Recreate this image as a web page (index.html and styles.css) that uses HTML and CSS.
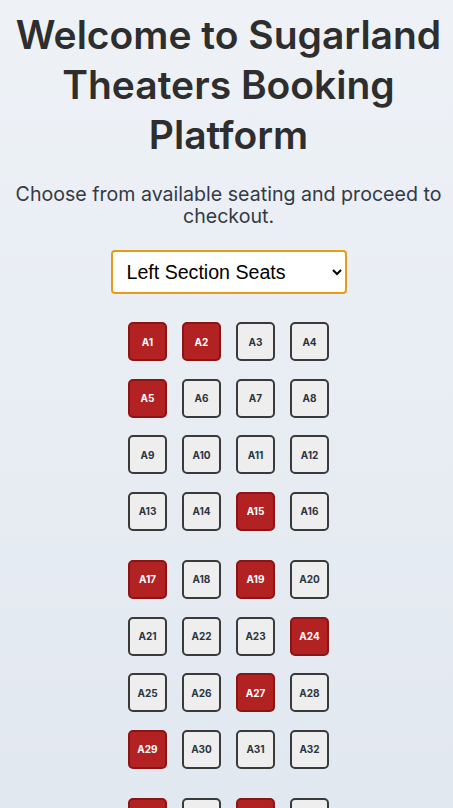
FILE: index.html
```html
<!DOCTYPE html>
<html lang="en">
<head>
<meta charset="utf-8">
<title>Sugarland Theaters Booking</title>
<link rel="stylesheet" href="styles.css">
</head>
<body>
<main class="page">
  <h1 class="title">Welcome to Sugarland Theaters Booking Platform</h1>
  <p class="subtitle">Choose from available seating and proceed to checkout.</p>
  <select class="section-select">
    <option>Left Section Seats</option>
    <option>Center Section Seats</option>
    <option>Right Section Seats</option>
  </select>
  <div class="seat-groups">
    <div class="seat-grid">
      <button class="seat taken">A1</button>
      <button class="seat taken">A2</button>
      <button class="seat">A3</button>
      <button class="seat">A4</button>
      <button class="seat taken">A5</button>
      <button class="seat">A6</button>
      <button class="seat">A7</button>
      <button class="seat">A8</button>
      <button class="seat">A9</button>
      <button class="seat">A10</button>
      <button class="seat">A11</button>
      <button class="seat">A12</button>
      <button class="seat">A13</button>
      <button class="seat">A14</button>
      <button class="seat taken">A15</button>
      <button class="seat">A16</button>
    </div>
    <div class="seat-grid">
      <button class="seat taken">A17</button>
      <button class="seat">A18</button>
      <button class="seat taken">A19</button>
      <button class="seat">A20</button>
      <button class="seat">A21</button>
      <button class="seat">A22</button>
      <button class="seat">A23</button>
      <button class="seat taken">A24</button>
      <button class="seat">A25</button>
      <button class="seat">A26</button>
      <button class="seat taken">A27</button>
      <button class="seat">A28</button>
      <button class="seat taken">A29</button>
      <button class="seat">A30</button>
      <button class="seat">A31</button>
      <button class="seat">A32</button>
    </div>
    <div class="seat-grid">
      <button class="seat taken">A33</button>
      <button class="seat">A34</button>
      <button class="seat taken">A35</button>
      <button class="seat">A36</button>
      <button class="seat">A37</button>
      <button class="seat">A38</button>
      <button class="seat">A39</button>
      <button class="seat">A40</button>
    </div>
  </div>
</main>
</body>
</html>
```

FILE: styles.css
```css
html, body {
  margin: 0;
  padding: 0;
}
body {
  min-height: 100vh;
  background: linear-gradient(180deg, #eef2f7 0%, #e2e8f0 100%);
  background-attachment: fixed;
  font-family: Inter, "Noto Sans", sans-serif;
  color: #333333;
}
.page {
  display: flex;
  flex-direction: column;
  align-items: center;
  padding: 10px 4px 40px 8px;
  text-align: center;
}
.title {
  margin: 0;
  font-size: 39px;
  line-height: 50px;
  font-weight: 600;
  color: #2e2e2e;
}
.subtitle {
  margin: 24px 0 0;
  font-size: 19.6px;
  line-height: 21.6px;
  font-weight: 400;
  color: #333a44;
}
.section-select {
  margin-top: 23px;
  width: 236px;
  height: 44px;
  padding: 0 10px 0 10px;
  font-family: "Liberation Sans", Arial, sans-serif;
  font-size: 19.6px;
  color: #000;
  background: #fff;
  border: 2px solid #e69c16;
  border-radius: 4px;
}
.seat-groups {
  margin-top: 28px;
  display: flex;
  flex-direction: column;
  gap: 29px;
}
.seat-grid {
  display: grid;
  grid-template-columns: repeat(4, 39px);
  column-gap: 15px;
  row-gap: 17.6px;
}
.seat {
  width: 39px;
  height: 39px;
  padding: 0;
  box-sizing: border-box;
  border: 2px solid #3a3a3a;
  border-radius: 5px;
  background: #eeeeee;
  color: #2b3440;
  font-family: Inter, "Noto Sans", sans-serif;
  font-size: 10px;
  font-weight: 700;
}
.seat.taken {
  background: #b22222;
  border-color: #8b1515;
  color: #ffffff;
}
```
